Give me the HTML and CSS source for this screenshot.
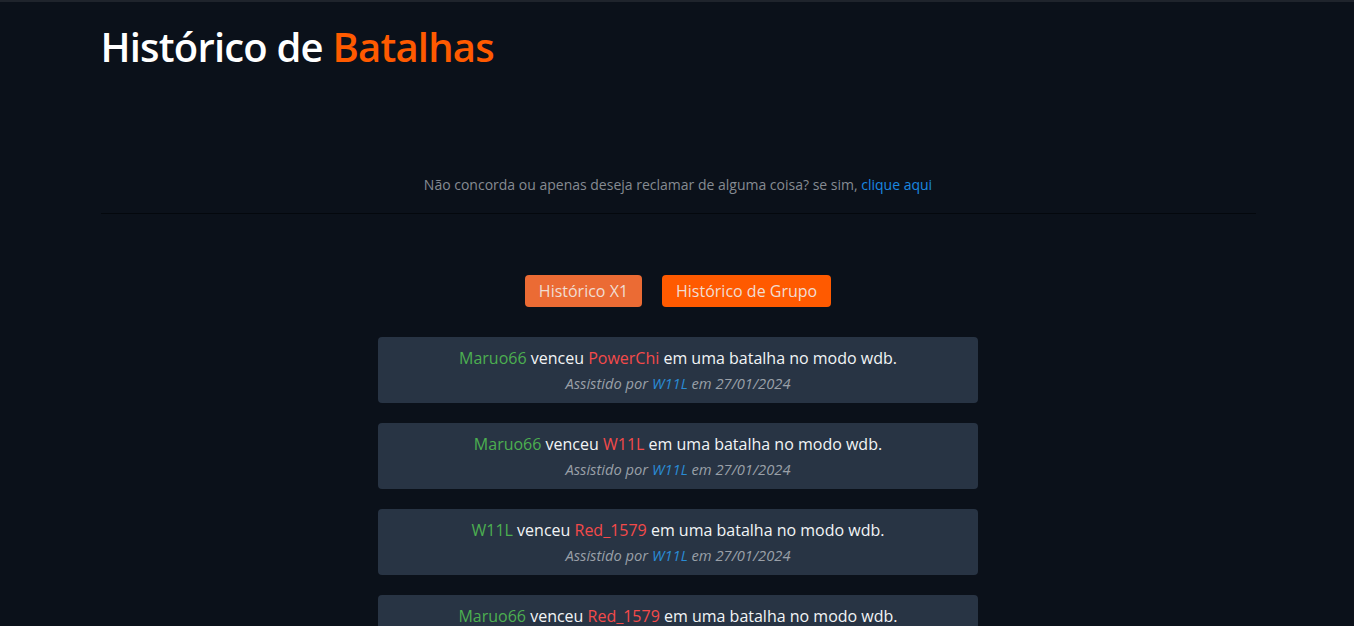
FILE: index.html
```html
<!DOCTYPE html>
<html lang="pt-BR">
<head>
<meta charset="utf-8">
<title>Histórico de Batalhas</title>
<link rel="stylesheet" href="styles.css">
</head>
<body>
<div class="topbar"></div>
<main class="container">
  <h1 class="title">Histórico de <span class="accent">Batalhas</span></h1>
  <p class="notice">Não concorda ou apenas deseja reclamar de alguma coisa? se sim, <a href="#" class="link">clique aqui</a></p>
  <hr class="divider">
  <div class="tabs">
    <button class="btn btn-x1">Histórico X1</button>
    <button class="btn btn-group">Histórico de Grupo</button>
  </div>
  <ul class="battles">
    <li class="battle">
      <p class="result"><span class="winner">Maruo66</span> venceu <span class="loser">PowerChi</span> em uma batalha no modo wdb.</p>
      <p class="meta">Assistido por <span class="judge">W11L</span> em 27/01/2024</p>
    </li>
    <li class="battle">
      <p class="result"><span class="winner">Maruo66</span> venceu <span class="loser">W11L</span> em uma batalha no modo wdb.</p>
      <p class="meta">Assistido por <span class="judge">W11L</span> em 27/01/2024</p>
    </li>
    <li class="battle">
      <p class="result"><span class="winner">W11L</span> venceu <span class="loser">Red_1579</span> em uma batalha no modo wdb.</p>
      <p class="meta">Assistido por <span class="judge">W11L</span> em 27/01/2024</p>
    </li>
    <li class="battle">
      <p class="result"><span class="winner">Maruo66</span> venceu <span class="loser">Red_1579</span> em uma batalha no modo wdb.</p>
      <p class="meta">Assistido por <span class="judge">W11L</span> em 27/01/2024</p>
    </li>
  </ul>
</main>
</body>
</html>
```

FILE: styles.css
```css
* { box-sizing: border-box; }

html, body {
  margin: 0;
  padding: 0;
  background: #0b111a;
  font-family: "Open Sans", "Noto Sans", sans-serif;
  color: #e8eaed;
}

.topbar {
  height: 2px;
  background: #1f242c;
}

.container {
  width: 1157px;
  padding-left: 2px;
  margin: 0 auto;
}

.title {
  margin: 15px 0 0;
  font-size: 40px;
  font-weight: 600;
  line-height: 60px;
  color: #ffffff;
  letter-spacing: -0.8px;
}

.accent { color: #ff5a00; }

.notice {
  margin: 98px 0 0;
  text-align: center;
  font-size: 14px;
  line-height: 20px;
  color: #868b92;
}

.link {
  color: #1a88e0;
  text-decoration: none;
}

.divider {
  margin: 18px 0 0;
  border: 0;
  border-top: 1px solid #04080d;
}

.tabs {
  display: flex;
  justify-content: center;
  gap: 20px;
  margin-top: 61px;
}

.btn {
  font-family: inherit;
  font-size: 16px;
  line-height: 24px;
  padding: 4px 14px;
  border: 0;
  border-radius: 4px;
  color: #f1ddd2;
  cursor: pointer;
}

.btn-x1 { background: #eb6b34; }
.btn-group { background: #ff5a00; }

.battles {
  list-style: none;
  margin: 30px auto 0;
  padding: 0;
  width: 600px;
  display: flex;
  flex-direction: column;
  gap: 20px;
}

.battle {
  background: #283444;
  border-radius: 4px;
  padding: 9px 15px 9px;
  text-align: center;
}

.result {
  margin: 0;
  font-size: 16px;
  line-height: 24px;
  color: #f2f4f6;
}

.meta {
  margin: 2px 0 0;
  font-size: 14.7px;
  line-height: 22px;
  font-style: italic;
  color: #9aa0a8;
}

.winner { color: #4caf50; }
.loser { color: #f44a4a; }
.judge { color: #2a8bd4; }
```
